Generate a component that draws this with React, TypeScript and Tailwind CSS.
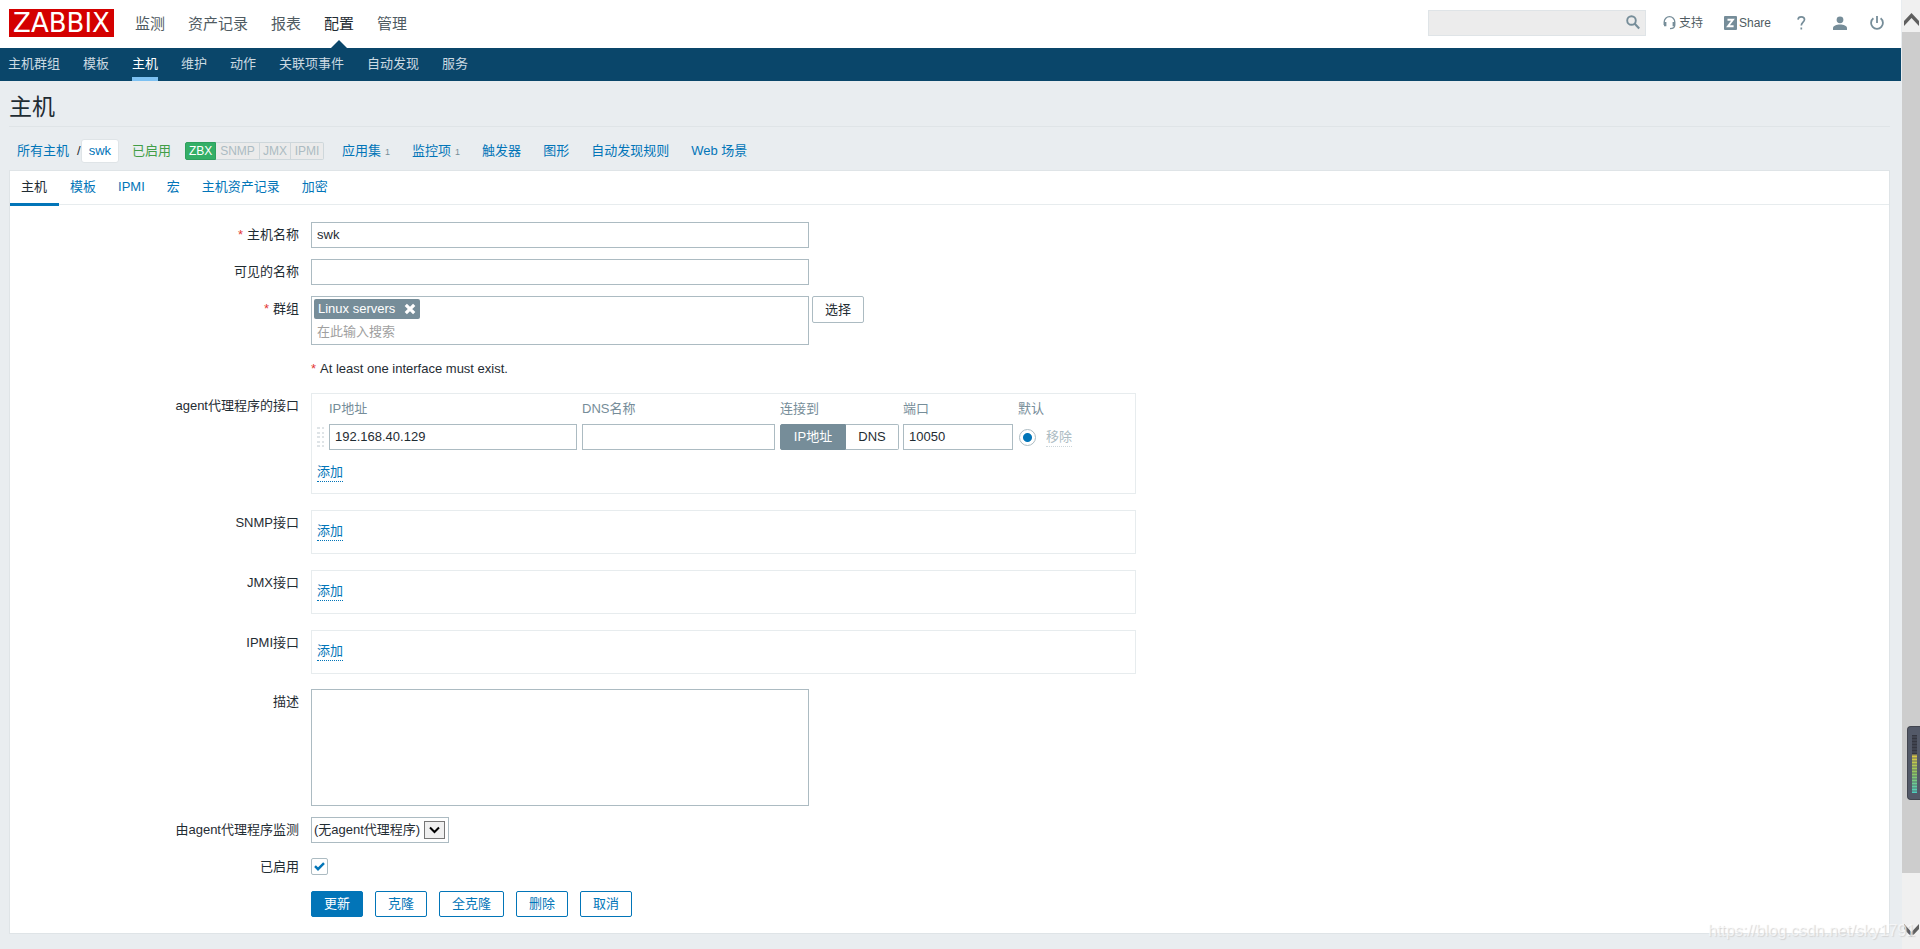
import type { ReactNode } from "react";

const mainMenu = ["监测", "资产记录", "报表", "配置", "管理"];
const subMenu = ["主机群组", "模板", "主机", "维护", "动作", "关联项事件", "自动发现", "服务"];
const tabs = ["主机", "模板", "IPMI", "宏", "主机资产记录", "加密"];
const hostLinks = [
    { label: "应用集", count: 1 },
    { label: "监控项", count: 1 },
    { label: "触发器" },
    { label: "图形" },
    { label: "自动发现规则" },
    { label: "Web 场景" },
];

const inputClass =
    "h-[26px] border border-[#acbbc2] bg-white px-[5px] pb-[2px] text-[13px] text-[#1f2c33] outline-none";
const buttonClass =
    "h-[26px] rounded-[2px] border border-[#0275b8] px-[12px] text-[13px] leading-[24px]";

const Header = () => (
    <header>
        <div className="flex h-12 items-center bg-white pl-[9px] pr-3">
            <a
                href="#"
                className="mb-[2px] flex h-7 w-[105px] items-center justify-center bg-[#d40000] font-['DejaVu_Sans'] text-[26px] leading-7 text-white"
            >
                ZABBIX
            </a>
            <nav className="flex h-full gap-[23px] pl-[21px]">
                {mainMenu.map((item) => (
                    <a
                        key={item}
                        href="#"
                        className={
                            item === "配置"
                                ? "relative text-[15px] leading-[47px] text-[#1f2c33]"
                                : "text-[15px] leading-[47px] text-[#4f5b62]"
                        }
                    >
                        {item}
                        {item === "配置" && (
                            <span className="absolute bottom-0 left-1/2 -translate-x-1/2 border-x-8 border-b-8 border-x-transparent border-b-[#0a466a]" />
                        )}
                    </a>
                ))}
            </nav>
            <form className="relative mb-[2px] ml-auto h-[26px] w-[218px]">
                <input
                    type="text"
                    aria-label="搜索"
                    className="h-full w-full border border-[#dfe4e7] bg-[#ececec] pl-[5px] pr-7 text-[13px] outline-none"
                />
                <button type="button" aria-label="搜索" className="absolute right-[6px] top-[5px]">
                    <svg width="14" height="15" viewBox="0 0 14 15" fill="none" stroke="#768d99">
                        <circle cx="5.5" cy="5.5" r="4.3" strokeWidth="1.9" />
                        <path d="M8.5 8.5l4.7 5" strokeWidth="2.1" />
                    </svg>
                </button>
            </form>
            <div className="mb-[3px] flex items-center pl-[17px] text-[12px] text-[#4f5b62]">
                <a href="#" className="flex items-center gap-[3px]">
                    <svg width="13" height="14" viewBox="0 0 13 14" fill="none" stroke="#768d99">
                        <path d="M1.2 9V6a5.3 5.3 0 0 1 10.6 0v3c0 2.4-1.6 3.6-4.8 3.6" strokeWidth="1.3" />
                        <path d="M2.2 6v4.3M10.8 6v4.3" strokeWidth="2.4" />
                    </svg>
                    支持
                </a>
                <a href="#" className="ml-[21px] flex items-center gap-[2px]">
                    <svg width="13" height="14" viewBox="0 0 13 14">
                        <rect width="13" height="14" rx="1" fill="#768d99" />
                        <path d="M3.5 3.8h5.4L4 10.2h5.6" fill="none" stroke="#fff" strokeWidth="1.9" />
                    </svg>
                    Share
                </a>
                <a href="#" aria-label="帮助" className="ml-[26px]">
                    <svg width="9" height="14" viewBox="0 0 9 14" fill="none" stroke="#768d99" strokeWidth="1.7">
                        <path d="M1 3.6C1.2 1.8 2.5.9 4.2.9c1.9 0 3.3 1 3.3 2.7C7.5 6.1 4.3 6.3 4.3 9.5M4.3 11.5v2" />
                    </svg>
                </a>
                <a href="#" aria-label="用户" className="ml-[27px]">
                    <svg width="14" height="14" viewBox="0 0 14 14" fill="#768d99">
                        <circle cx="7" cy="3.8" r="3.4" />
                        <path d="M0 14v-2c0-2.2 3.5-3.6 7-3.6s7 1.4 7 3.6v2z" />
                    </svg>
                </a>
                <a href="#" aria-label="退出" className="ml-[23px] mr-[5px]">
                    <svg width="14" height="14" viewBox="0 0 14 14" fill="none" stroke="#768d99" strokeWidth="1.8">
                        <path d="M3.4 2.3a5.9 5.9 0 1 0 7.2 0M7 0v7" />
                    </svg>
                </a>
            </div>
        </div>
        <nav className="flex h-[33px] gap-[23px] bg-[#0a466a] pl-[8px] text-[13px] text-[#ccdae2]">
            {subMenu.map((item) => (
                <a
                    key={item}
                    href="#"
                    className={
                        item === "主机"
                            ? "h-[33px] border-b-4 border-[#7dc1f2] leading-[31px] text-white"
                            : "leading-[31px]"
                    }
                >
                    {item}
                </a>
            ))}
        </nav>
    </header>
);

const HostBar = () => (
    <div className="flex h-[43px] items-center pl-[8px] pt-[5px] text-[13px] text-[#0275b8]">
        <a href="#">所有主机</a>
        <span className="pl-[8px] text-[#1f2c33]">/</span>
        <a
            href="#"
            className="h-6 rounded-[3px] border border-[#dfe4e7] bg-white px-[7px] leading-[21px]"
        >
            swk
        </a>
        <span className="ml-[13px] text-[#429e47]">已启用</span>
        <div className="ml-[14px] flex h-[18px] text-center text-[12px] leading-4 text-[#acbbc2]">
            <span className="w-[31px] rounded-l-[2px] border border-[#2f9f5e] bg-[#34af67] text-white">ZBX</span>
            <span className="w-[44px] border-y border-r border-[#ced7db] bg-[#ebebeb]">SNMP</span>
            <span className="w-[31px] border-y border-r border-[#ced7db] bg-[#ebebeb]">JMX</span>
            <span className="w-[33px] rounded-r-[2px] border-y border-r border-[#ced7db] bg-[#ebebeb]">IPMI</span>
        </div>
        <nav className="flex gap-[22px] pl-[18px]">
            {hostLinks.map(({ label, count }) => (
                <span key={label}>
                    <a href="#">{label}</a>
                    {count && <sup className="top-0 pl-1 text-[9px] text-[#768d99]">{count}</sup>}
                </span>
            ))}
        </nav>
    </div>
);

const Row = ({
    label,
    htmlFor,
    required,
    className = "mt-[11px]",
    children,
}: {
    label?: string;
    htmlFor?: string;
    required?: boolean;
    className?: string;
    children: ReactNode;
}) => (
    <div className={`flex items-start gap-3 ${className}`}>
        <div className="w-[289px] shrink-0 text-right leading-[26px]">
            {label && (
                <label htmlFor={htmlFor}>
                    {required && <span className="mr-1 text-[#e33734]">*</span>}
                    {label}
                </label>
            )}
        </div>
        {children}
    </div>
);

const AddButton = () => (
    <button type="button" className="border-b border-dotted border-[#0275b8] leading-[18px] text-[#0275b8]">
        添加
    </button>
);

const InterfaceTable = () => (
    <div className="h-[101px] w-[825px] border border-[#e7ecee] pl-[5px]">
        <table className="text-left">
            <thead>
                <tr className="h-[30px] text-[#768d99]">
                    <th className="w-[12px]" />
                    <th className="w-[253px] font-normal">IP地址</th>
                    <th className="w-[198px] font-normal">DNS名称</th>
                    <th className="w-[123px] font-normal">连接到</th>
                    <th className="w-[115px] font-normal">端口</th>
                    <th className="w-[28px] whitespace-nowrap font-normal">默认</th>
                    <th />
                </tr>
            </thead>
            <tbody>
                <tr className="h-[26px]">
                    <td>
                        <svg width="8" height="22" viewBox="0 0 8 22" fill="#dfe4e7">
                            {[0, 5, 9, 14, 18].map((y) => (
                                <g key={y}>
                                    <rect y={y + 1} width="3" height="2" />
                                    <rect x="5" y={y + 1} width="2" height="2" />
                                </g>
                            ))}
                        </svg>
                    </td>
                    <td>
                        <input aria-label="IP地址" defaultValue="192.168.40.129" className={`${inputClass} block w-[248px]`} />
                    </td>
                    <td>
                        <input aria-label="DNS名称" className={`${inputClass} block w-[193px]`} />
                    </td>
                    <td>
                        <div className="flex h-[26px] w-[119px] leading-[24px]">
                            <button type="button" className="w-[66px] rounded-l-[2px] border border-[#768d99] bg-[#768d99] text-white">
                                IP地址
                            </button>
                            <button type="button" className="flex-1 rounded-r-[2px] border border-l-0 border-[#acbbc2]">
                                DNS
                            </button>
                        </div>
                    </td>
                    <td>
                        <input aria-label="端口" defaultValue="10050" className={`${inputClass} block w-[110px]`} />
                    </td>
                    <td>
                        <input
                            type="radio"
                            aria-label="默认"
                            defaultChecked
                            className="ml-px block h-[17px] w-[17px] appearance-none rounded-full border border-[#acbbc2] bg-white bg-[radial-gradient(circle,#0275b8_4px,transparent_5px)]"
                        />
                    </td>
                    <td>
                        <button type="button" disabled className="border-b border-dotted border-[#ced7db] leading-[18px] text-[#acbbc2]">
                            移除
                        </button>
                    </td>
                </tr>
            </tbody>
        </table>
        <div className="pt-[12px]">
            <AddButton />
        </div>
    </div>
);

const HostForm = () => (
    <form className="pb-4 pt-[6px]">
        <Row label="主机名称" htmlFor="host" required>
            <input id="host" defaultValue="swk" className={`${inputClass} w-[498px]`} />
        </Row>
        <Row label="可见的名称" htmlFor="visible">
            <input id="visible" className={`${inputClass} w-[498px]`} />
        </Row>
        <Row label="群组" htmlFor="groups" required>
            <div className="flex items-start gap-[3px]">
                <div className="h-[49px] w-[498px] border border-[#acbbc2] pl-[2px] pt-[2px]">
                    <span className="flex h-5 w-[106px] items-center justify-between rounded-[2px] bg-[#768d99] pl-1 pr-1 text-white">
                        Linux servers
                        <button type="button" aria-label="删除">
                            <svg width="12" height="12" viewBox="0 0 12 12" stroke="#fff" strokeWidth="3.2">
                                <path d="M1.8 1.8l8.4 8.4M10.2 1.8l-8.4 8.4" />
                            </svg>
                        </button>
                    </span>
                    <input
                        id="groups"
                        placeholder="在此输入搜索"
                        className="block h-[25px] w-full pl-[3px] outline-none placeholder:text-[#a0a0a0]"
                    />
                </div>
                <button type="button" className="h-[27px] rounded-[2px] border border-[#acbbc2] px-3 leading-[25px]">
                    选择
                </button>
            </div>
        </Row>
        <Row>
            <p className="leading-[26px]">
                <span className="mr-1 text-[#e33734]">*</span>At least one interface must exist.
            </p>
        </Row>
        <Row label="agent代理程序的接口">
            <InterfaceTable />
        </Row>
        {["SNMP接口", "JMX接口", "IPMI接口"].map((label) => (
            <Row key={label} label={label} className="mt-4 h-[44px]">
                <div className="h-[44px] w-[825px] border border-[#e7ecee] pl-[5px] pt-[10px]">
                    <AddButton />
                </div>
            </Row>
        ))}
        <Row label="描述" htmlFor="description" className="mt-[15px]">
            <textarea id="description" className="h-[117px] w-[498px] resize-none border border-[#acbbc2] p-[5px] outline-none" />
        </Row>
        <Row label="由agent代理程序监测" htmlFor="proxy">
            <div className="relative">
                <select id="proxy" className="h-[26px] w-[138px] appearance-none border border-[#acbbc2] bg-white pl-[2px] outline-none">
                    <option>(无agent代理程序)</option>
                </select>
                <span className="pointer-events-none absolute right-1 top-1 flex h-[18px] w-[21px] items-center justify-center border border-[#767676] bg-[#f0f0f0]">
                    <svg width="11" height="8" viewBox="0 0 11 8" fill="none" stroke="#000" strokeWidth="2">
                        <path d="M1 1.5l4.5 4.5L10 1.5" />
                    </svg>
                </span>
            </div>
        </Row>
        <Row label="已启用" htmlFor="enabled">
            <div className="relative mt-1 h-[17px] w-[17px]">
                <input
                    id="enabled"
                    type="checkbox"
                    defaultChecked
                    className="block h-[17px] w-[17px] appearance-none rounded-[2px] border border-[#acbbc2] bg-white"
                />
                <svg className="pointer-events-none absolute left-[3px] top-[4px]" width="11" height="9" viewBox="0 0 11 9" fill="none" stroke="#0275b8" strokeWidth="2.4">
                    <path d="M1 4.2l3 3L10 1.2" />
                </svg>
            </div>
        </Row>
        <Row className="mt-[11px]">
            <div className="flex gap-3 text-[#0275b8]">
                <button type="button" className={`${buttonClass} bg-[#0275b8] text-white`}>
                    更新
                </button>
                {["克隆", "全克隆", "删除", "取消"].map((label) => (
                    <button key={label} type="button" className={`${buttonClass} bg-white`}>
                        {label}
                    </button>
                ))}
            </div>
        </Row>
    </form>
);

const Scrollbar = () => (
    <aside className="relative flex w-[18px] shrink-0 flex-col bg-[#f0f0f0]">
        <svg className="h-8 w-full" viewBox="0 0 18 32" fill="#5f5f5f">
            <path d="M9.5 13l7.5 8v5l-7.500-8-7.500 8v-5z" />
        </svg>
        <div className="flex-1 bg-[#cdcdcd]" />
        <svg className="h-[76px] w-full" viewBox="0 0 18 76" fill="#5f5f5f">
            <path d="M9.5 64l7.500-8v-5l-7.500 8-7.500-8v5z" />
        </svg>
        {/* level meter docked to the window edge */}
        <div className="absolute right-0 top-[726px] h-[74px] w-[13px] rounded-l-[4px] border border-r-0 border-[#42454f] bg-[#535968]">
            <div className="ml-[4px] mt-[8px] h-[58px] w-[5px] bg-[linear-gradient(#343640_0_19px,#e0c840_20px,#8fc860_38px,#4ccfc0_58px)]">
                <div className="h-full bg-[repeating-linear-gradient(transparent_0_1px,#53596866_1px_3px)]" />
            </div>
        </div>
    </aside>
);

export default function App() {
    return (
        <div className="relative flex min-h-screen overflow-hidden bg-[#e9edf0] font-['Liberation_Sans','Noto_Sans_CJK_SC',sans-serif] text-[13px] text-[#1f2c33]">
            <div className="mr-px min-w-0 flex-1">
                <Header />
                <main className="pl-[9px] pr-[11px]">
                    <h1 className="h-[46px] border-b border-[#dfe4e7] text-[23px] leading-[52px]">主机</h1>
                    <HostBar />
                    <section className="border border-[#dfe4e7] bg-white">
                        <nav className="flex h-[34px] border-b border-[#e7ecee] text-[#0275b8]">
                            {tabs.map((tab) => (
                                <a
                                    key={tab}
                                    href="#"
                                    className={
                                        tab === "主机"
                                            ? "h-[35px] border-b-3 border-[#0275b8] pl-[11px] pr-3 leading-[31px] text-[#1f2c33]"
                                            : "px-[11px] leading-[31px]"
                                    }
                                >
                                    {tab}
                                </a>
                            ))}
                        </nav>
                        <HostForm />
                    </section>
                </main>
            </div>
            <Scrollbar />
            <span className="pointer-events-none absolute bottom-[8px] left-[1708px] whitespace-nowrap text-[16px] leading-5 text-white/60 [text-shadow:1px_1px_1px_#d4d4d4]">
                https://blog.csdn.net/sky1791
            </span>
        </div>
    );
}
